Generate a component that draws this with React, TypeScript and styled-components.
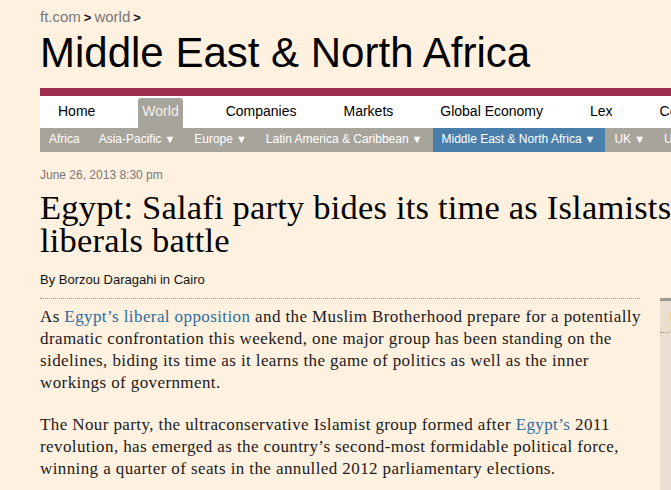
import React from "react";
import styled, { createGlobalStyle } from "styled-components";

const GlobalStyle = createGlobalStyle`
  html, body {
    margin: 0;
    padding: 0;
    background: #fff1e0;
    overflow: hidden;
  }
`;

const Page = styled.div`
  width: 972px;
  padding-left: 40px;
  font-family: "Liberation Sans", Arial, sans-serif;
`;

const Breadcrumb = styled.div`
  padding-top: 8px;
  font-size: 15px;
  line-height: 18px;
  color: #777;
`;

const Crumb = styled.span`
  color: #777;
`;

const Sep = styled.span`
  color: #111;
  font-weight: bold;
  font-size: 13px;
  margin: 0 3px;
`;

const SectionTitle = styled.h1`
  margin: 2px 0 11px;
  font-weight: normal;
  font-size: 42px;
  line-height: 48px;
  color: #000;
  white-space: nowrap;
`;

const RedBar = styled.div`
  height: 8px;
  background: #9e2f50;
`;

const Nav = styled.ul`
  display: flex;
  align-items: flex-end;
  gap: 39px;
  height: 32px;
  margin: 0;
  padding: 0 0 0 14px;
  list-style: none;
  background: #fff;
`;

const NavItem = styled.li<{ $active?: boolean }>`
  height: 28px;
  padding: 0 4px 2px;
  font-size: 14px;
  line-height: 26px;
  white-space: nowrap;
  color: ${(p) => (p.$active ? "#f2f0ea" : "#000")};
  background: ${(p) => (p.$active ? "#a7a49b" : "transparent")};
  border-radius: 3px 3px 0 0;
`;

const SubNav = styled.ul`
  display: flex;
  height: 24px;
  margin: 0;
  padding: 0;
  list-style: none;
  background: #a7a49b;
`;

const SubItem = styled.li<{ $active?: boolean }>`
  padding: 0 10px 0 9px;
  font-size: 12px;
  line-height: 23px;
  color: #fff;
  white-space: nowrap;
  background: ${(p) => (p.$active ? "#4a7fab" : "transparent")};
`;

const Arrow = styled.span`
  font-size: 11px;
  margin-left: 3px;
`;

const DateLine = styled.div`
  margin-top: 16px;
  font-size: 12px;
  line-height: 14px;
  color: #777;
`;

const Headline = styled.h2`
  margin: 9px 0 0;
  font-family: "Liberation Serif", "Times New Roman", serif;
  font-weight: normal;
  font-size: 34.5px;
  line-height: 32.5px;
  color: #000;
  white-space: nowrap;
  letter-spacing: 0.2px;
`;

const Byline = styled.div`
  margin-top: 16px;
  font-size: 13px;
  line-height: 16px;
  color: #111;
`;

const Columns = styled.div`
  display: flex;
  gap: 20px;
  margin-top: 10px;
`;

const Story = styled.div`
  width: 600px;
  flex: none;
  border-top: 1px dotted #9a948c;
  padding-top: 7px;
`;

const Para = styled.p`
  margin: 0 0 20px;
  font-family: "Liberation Serif", "Times New Roman", serif;
  font-size: 17px;
  line-height: 22px;
  color: #1a1a1a;
  white-space: nowrap;
  letter-spacing: 0.4px;
`;

const Link = styled.a`
  color: #2e6d9e;
  text-decoration: none;
`;

const Sidebar = styled.aside`
  width: 300px;
  flex: none;
  border-top: 3px solid #9c9990;
  background: #eadfcf;
  height: 200px;
`;

const SideHeader = styled.div`
  height: 31px;
  border-bottom: 1px dotted #9a948c;
  display: flex;
  align-items: center;
  padding-left: 9px;
`;

const SideIcon = styled.span`
  display: block;
  width: 10px;
  height: 9px;
  background: #f4d88c;
`;

export default function App() {
  return (
    <>
      <GlobalStyle />
      <Page>
        <Breadcrumb>
          <Crumb>ft.com</Crumb>
          <Sep>&gt;</Sep>
          <Crumb>world</Crumb>
          <Sep>&gt;</Sep>
        </Breadcrumb>
        <SectionTitle>Middle East &amp; North Africa</SectionTitle>
        <RedBar />
        <Nav>
          <NavItem>Home</NavItem>
          <NavItem $active>World</NavItem>
          <NavItem>Companies</NavItem>
          <NavItem>Markets</NavItem>
          <NavItem>Global Economy</NavItem>
          <NavItem>Lex</NavItem>
          <NavItem>Comment</NavItem>
          <NavItem>Management</NavItem>
        </Nav>
        <SubNav>
          <SubItem>Africa</SubItem>
          <SubItem>
            Asia-Pacific<Arrow>▼</Arrow>
          </SubItem>
          <SubItem>
            Europe<Arrow>▼</Arrow>
          </SubItem>
          <SubItem>
            Latin America &amp; Caribbean<Arrow>▼</Arrow>
          </SubItem>
          <SubItem $active>
            Middle East &amp; North Africa<Arrow>▼</Arrow>
          </SubItem>
          <SubItem>
            UK<Arrow>▼</Arrow>
          </SubItem>
          <SubItem>
            US<Arrow>▼</Arrow>
          </SubItem>
        </SubNav>
        <DateLine>June 26, 2013 8:30 pm</DateLine>
        <Headline>
          Egypt: Salafi party bides its time as Islamists and
          <br />
          liberals battle
        </Headline>
        <Byline>By Borzou Daragahi in Cairo</Byline>
        <Columns>
          <Story>
            <Para>
              As <Link href="#">Egypt’s liberal opposition</Link> and the Muslim Brotherhood prepare for a potentially
              <br />
              dramatic confrontation this weekend, one major group has been standing on the
              <br />
              sidelines, biding its time as it learns the game of politics as well as the inner
              <br />
              workings of government.
            </Para>
            <Para>
              The Nour party, the ultraconservative Islamist group formed after <Link href="#">Egypt’s</Link> 2011
              <br />
              revolution, has emerged as the country’s second-most formidable political force,
              <br />
              winning a quarter of seats in the annulled 2012 parliamentary elections.
            </Para>
          </Story>
          <Sidebar>
            <SideHeader>
              <SideIcon />
            </SideHeader>
          </Sidebar>
        </Columns>
      </Page>
    </>
  );
}
